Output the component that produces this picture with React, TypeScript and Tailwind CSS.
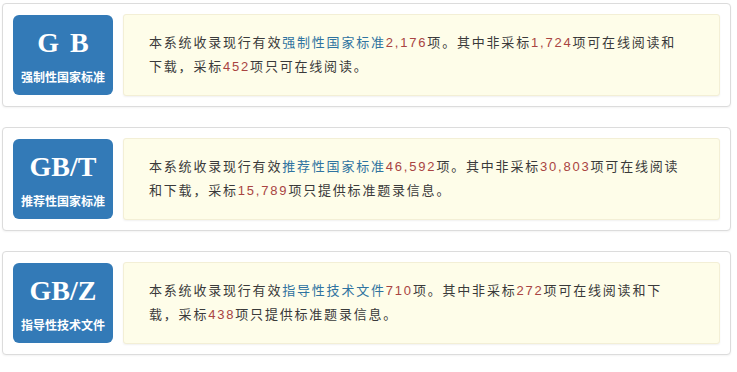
import React from 'react'

type Part = { t: string; c?: 'link' | 'num' }

const items: { code: string; wide?: boolean; label: string; parts: Part[] }[] = [
    {
        code: 'GB',
        wide: true,
        label: '强制性国家标准',
        parts: [
            { t: '本系统收录现行有效' },
            { t: '强制性国家标准', c: 'link' },
            { t: '2,176', c: 'num' },
            { t: '项。其中非采标' },
            { t: '1,724', c: 'num' },
            { t: '项可在线阅读和下载，采标' },
            { t: '452', c: 'num' },
            { t: '项只可在线阅读。' },
        ],
    },
    {
        code: 'GB/T',
        label: '推荐性国家标准',
        parts: [
            { t: '本系统收录现行有效' },
            { t: '推荐性国家标准', c: 'link' },
            { t: '46,592', c: 'num' },
            { t: '项。其中非采标' },
            { t: '30,803', c: 'num' },
            { t: '项可在线阅读和下载，采标' },
            { t: '15,789', c: 'num' },
            { t: '项只提供标准题录信息。' },
        ],
    },
    {
        code: 'GB/Z',
        label: '指导性技术文件',
        parts: [
            { t: '本系统收录现行有效' },
            { t: '指导性技术文件', c: 'link' },
            { t: '710', c: 'num' },
            { t: '项。其中非采标' },
            { t: '272', c: 'num' },
            { t: '项可在线阅读和下载，采标' },
            { t: '438', c: 'num' },
            { t: '项只提供标准题录信息。' },
        ],
    },
]

const App = () => {
    return (
        <div className="min-h-screen bg-white pl-[2px] pt-[3px] flex flex-col gap-[20px] font-['Liberation_Sans','Noto_Sans_CJK_SC',sans-serif]">
            {items.map((item) => (
                <div
                    key={item.code}
                    className="w-[729px] border border-[#dcdcdc] rounded-[4px] bg-white p-[10px] flex items-center gap-[10px] shadow-[0_1px_2px_rgba(0,0,0,0.05)]"
                >
                    {/* code badge */}
                    <div className="w-[100px] h-[80px] shrink-0 rounded-[6px] bg-[#337ab7] text-white flex flex-col items-center">
                        <div
                            className={
                                "mt-[12px] h-[32px] leading-[32px] text-[28px] font-bold font-['Liberation_Serif','Noto_Serif_CJK_SC',serif] " +
                                (item.wide ? 'tracking-[11px] pl-[11px]' : '')
                            }
                        >
                            {item.code}
                        </div>
                        <div className="mt-[11px] text-[12px] leading-[16px] font-bold">{item.label}</div>
                    </div>

                    {/* description */}
                    <div className="flex-1 h-[82px] flex items-center bg-[#fefde9] border border-[#f3efd6] rounded-[3px] shadow-[0_1px_2px_rgba(0,0,0,0.06)] pl-[25px] pr-[29px]">
                        <p className="text-[13px] leading-[24px] tracking-[1.8px] text-[#3a3a3a]">
                            {item.parts.map((p, i) => (
                                <span
                                    key={i}
                                    className={p.c === 'link' ? 'text-[#2f73a0]' : p.c === 'num' ? 'text-[#a94442]' : ''}
                                >
                                    {p.t}
                                </span>
                            ))}
                        </p>
                    </div>
                </div>
            ))}
        </div>
    )
}

export default App
